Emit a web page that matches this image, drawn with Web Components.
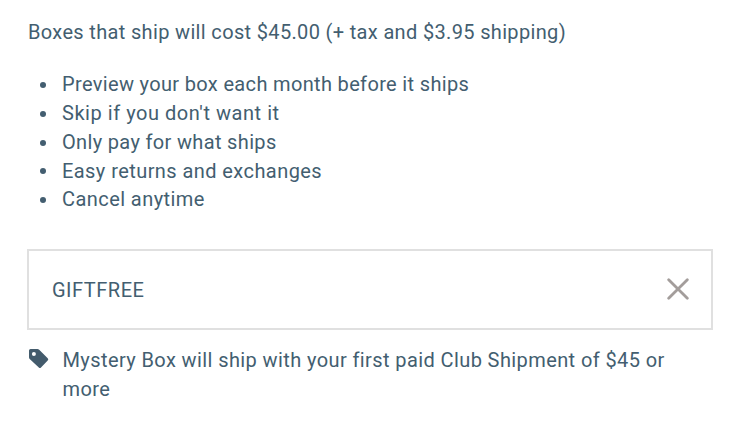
<!DOCTYPE html>
<html lang="en">
<head>
<meta charset="utf-8">
<title>Club box</title>
<style>
    body {
        margin: 0;
        background: #fff;
        color: #435e70;
        font: 20px/28.8px Roboto, "Liberation Sans", sans-serif;
        letter-spacing: 0.34px;
    }
    .loose {
        letter-spacing: 0.43px;
    }
    .looser {
        letter-spacing: 0.54px;
    }
</style>
</head>
<body>
<club-offer>
    <span slot="price">Boxes that ship will cost $45.00 (+ tax and $3.95 shipping)</span>
    <perk-item>Preview your box each month before it ships</perk-item>
    <perk-item class="looser">Skip if you don't want it</perk-item>
    <perk-item>Only pay for what ships</perk-item>
    <perk-item class="loose">Easy returns and exchanges</perk-item>
    <perk-item class="loose">Cancel anytime</perk-item>
    <promo-code slot="promo">GIFTFREE</promo-code>
    <promo-note slot="promo">Mystery Box will ship with your first paid Club Shipment of $45 or more</promo-note>
</club-offer>

<script>
const define = (name, html) => {
    const template = document.createElement('template')
    template.innerHTML = html
    customElements.define(name, class extends HTMLElement {
        constructor() {
            super()
            this.attachShadow({ mode: 'open' })
            this.shadowRoot.appendChild(template.content.cloneNode(true))
        }
    })
}

define('club-offer', `
    <style>
        :host {
            display: block;
            box-sizing: border-box;
            padding: 18px 20px 0 27px;
        }
        p {
            margin: 0 0 23.4px 1px;
        }
        .perks {
            margin-bottom: 34.8px;
        }
    </style>
    <p><slot name="price"></slot></p>
    <div class="perks" role="list"><slot></slot></div>
    <slot name="promo"></slot>
`)

define('perk-item', `
    <style>
        :host {
            display: flex;
            align-items: center;
            padding-left: 13px;
        }
        i {
            width: 6px;
            height: 6px;
            margin: 1px 16px 0 0;
            border-radius: 50%;
            background: currentColor;
        }
    </style>
    <i></i><span role="listitem"><slot></slot></span>
`)

define('promo-code', `
    <style>
        :host {
            display: flex;
            align-items: center;
            justify-content: space-between;
            box-sizing: border-box;
            height: 81px;
            padding: 0 22px 0 23px;
            border: 2px solid #e0e0e0;
            letter-spacing: 0.5px;
        }
        span {
            padding-top: 1px;
        }
        button {
            display: flex;
            padding: 0;
            border: 0;
            background: none;
        }
        path {
            fill: none;
            stroke: #a39d9b;
            stroke-width: 2.8;
            stroke-linecap: round;
        }
    </style>
    <span><slot></slot></span>
    <button aria-label="Remove code">
        <svg width="22" height="22" viewBox="0 0 22 22"><path d="M1.7 1.7 20.3 20.3M20.3 1.7 1.7 20.3"/></svg>
    </button>
`)

define('promo-note', `
    <style>
        :host {
            display: flex;
            gap: 13.5px;
            margin-top: 16px;
            padding: 0 40px 0 2px;
            letter-spacing: 0.4px;
        }
        svg {
            flex: none;
            margin-top: 3px;
        }
    </style>
    <svg width="20" height="20" viewBox="0 0 20 20">
        <path fill="#435b6c" fill-rule="evenodd" d="M1.6 0H8.4Q9.4 0 10.2.7L18.7 9.2Q19.9 10.4 18.7 11.6L12 18.5Q10.9 19.6 9.8 18.5L.7 10Q0 9.3 0 8.3V1.6Q0 0 1.6 0ZM4.9 2.9A2 2 0 1 0 4.9 6.9 2 2 0 1 0 4.9 2.9Z"/>
    </svg>
    <span><slot></slot></span>
`)
</script>
</body>
</html>
